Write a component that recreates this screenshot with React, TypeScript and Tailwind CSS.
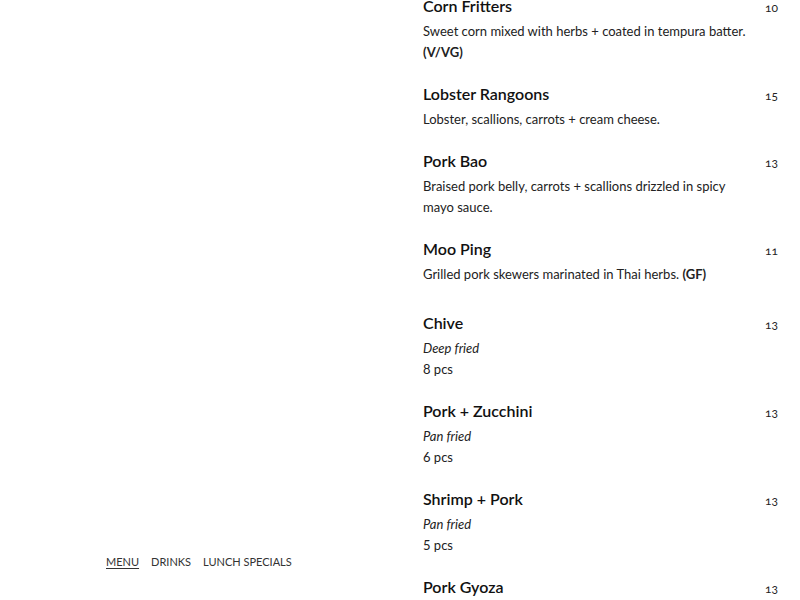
import React from "react";

type Dish = {
  name: string;
  price: string;
  desc?: React.ReactNode;
  style?: string;
  pcs?: string;
  gapBefore?: boolean;
};

const dishes: Dish[] = [
  {
    name: "Corn Fritters",
    price: "10",
    desc: (
      <>
        Sweet corn mixed with herbs + coated in tempura batter. <b className="font-bold">(V/VG)</b>
      </>
    ),
  },
  { name: "Lobster Rangoons", price: "15", desc: "Lobster, scallions, carrots + cream cheese." },
  { name: "Pork Bao", price: "13", desc: "Braised pork belly, carrots + scallions drizzled in spicy mayo sauce." },
  {
    name: "Moo Ping",
    price: "11",
    desc: (
      <>
        Grilled pork skewers marinated in Thai herbs. <b className="font-bold">(GF)</b>
      </>
    ),
  },
  { name: "Chive", price: "13", style: "Deep fried", pcs: "8 pcs", gapBefore: true },
  { name: "Pork + Zucchini", price: "13", style: "Pan fried", pcs: "6 pcs" },
  { name: "Shrimp + Pork", price: "13", style: "Pan fried", pcs: "5 pcs" },
  { name: "Pork Gyoza", price: "13", style: "Pan fried", pcs: "6 pcs" },
];

function MenuItem({ d }: { d: Dish }) {
  return (
    <div className={d.gapBefore ? "mt-[7px]" : ""}>
      <div className="flex items-baseline justify-between">
        <h3 className="text-[16px] font-semibold leading-[21px] text-[#111]">{d.name}</h3>
        <span className="text-[12px] text-[#222] oldstyle-nums">{d.price}</span>
      </div>
      <div className="mt-[4px] max-w-[330px] text-[13px] leading-[21px] text-[#222]">
        {d.desc && <p>{d.desc}</p>}
        {d.style && <p className="italic">{d.style}</p>}
        {d.pcs && <p>{d.pcs}</p>}
      </div>
    </div>
  );
}

export default function App() {
  return (
    <div className="flex h-[600px] overflow-hidden bg-white font-['Lato',sans-serif]">
      <aside className="flex w-[423px] shrink-0 flex-col justify-end pb-[31px] pl-[106px]">
        <nav className="flex gap-[12px] text-[11px] uppercase leading-[14px] text-[#333]">
          <a className="underline underline-offset-2">Menu</a>
          <a>Drinks</a>
          <a>Lunch Specials</a>
        </nav>
      </aside>
      <main className="mt-[-5px] flex w-[355px] flex-col gap-[20px]">
        {dishes.map((d) => (
          <MenuItem key={d.name} d={d} />
        ))}
      </main>
    </div>
  );
}
